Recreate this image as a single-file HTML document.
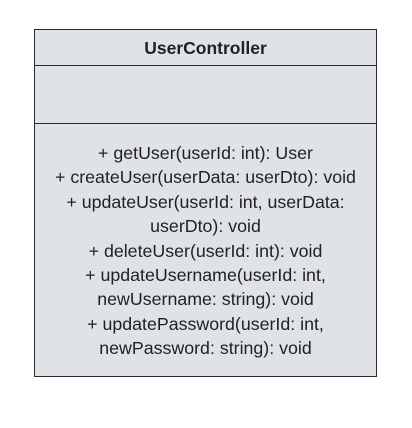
<!DOCTYPE html>
<html><head><style>
body{margin:0;width:412px;height:428px;background:#fff;position:relative;overflow:hidden;font-family:"Liberation Sans",sans-serif;color:#222}
.box{position:absolute;left:34px;top:29px;width:341px;height:346px;border:1.5px solid #2a2a2a;background:#dfe2e7}
.t{position:absolute;left:0;right:0;top:0;height:35px;border-bottom:1.5px solid #2a2a2a;text-align:center;font-weight:bold;font-size:17.5px;line-height:36px}
.m{position:absolute;left:0;right:0;top:36px;height:57px;border-bottom:1.5px solid #2a2a2a}
.o{position:absolute;left:-10px;right:-10px;top:111px;text-align:center;font-size:17.8px;line-height:24.4px}
</style></head><body>
<div class="box"><div class="t">UserController</div><div class="m"></div>
<div class="o">+ getUser(userId: int): User<br>+ createUser(userData: userDto): void<br>+ updateUser(userId: int, userData:<br>userDto): void<br>+ deleteUser(userId: int): void<br>+ updateUsername(userId: int,<br>newUsername: string): void<br>+ updatePassword(userId: int,<br>newPassword: string): void</div></div>
</body></html>
